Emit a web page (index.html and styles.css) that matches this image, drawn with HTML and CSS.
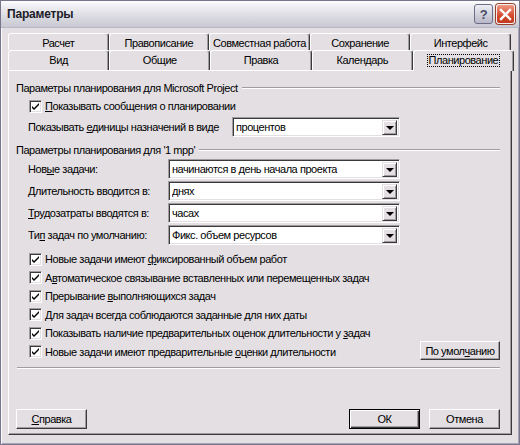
FILE: index.html
```html
<!DOCTYPE html>
<html lang="ru">
<head>
    <meta charset="UTF-8">
    <title>Параметры</title>
    <link rel="stylesheet" href="styles.css">
</head>
<body>
<div class="window">
    <div class="titlebar">
        <span class="title">Параметры</span>
        <span class="cap-btn cap-help">?</span>
        <span class="cap-btn cap-close">
            <svg width="13" height="13" viewBox="0 0 13 13"><path d="M2 2 L11 11 M11 2 L2 11" stroke="#fff" stroke-width="2.4" stroke-linecap="square"/></svg>
        </span>
    </div>

    <div class="client">
        <div class="tabs">
            <div class="tab-row back">
                <span class="tab">Расчет</span>
                <span class="tab">Правописание</span>
                <span class="tab">Совместная работа</span>
                <span class="tab">Сохранение</span>
                <span class="tab">Интерфейс</span>
            </div>
            <div class="tab-row front">
                <span class="tab">Вид</span>
                <span class="tab">Общие</span>
                <span class="tab">Правка</span>
                <span class="tab">Календарь</span>
                <span class="tab active"><span class="focus">Планирование</span></span>
            </div>
        </div>

        <div class="page">
            <div class="group-title">Параметры планирования для Microsoft Project</div>
            <label class="check first"><span class="box"></span><span><u>П</u>оказывать сообщения о планировании</span></label>
            <div class="field wide">
                <span class="label">Показывать <u>е</u>диницы назначений в виде</span>
                <span class="combo"><span class="value">процентов</span><span class="arrow"></span></span>
            </div>

            <div class="group-title second">Параметры планирования для '1 mpp'</div>
            <div class="fields">
                <div class="field">
                    <span class="label">Нов<u>ы</u>е задачи:</span>
                    <span class="combo"><span class="value">начинаются в день начала проекта</span><span class="arrow"></span></span>
                </div>
                <div class="field">
                    <span class="label"><u>Д</u>лительность вводится в:</span>
                    <span class="combo"><span class="value">днях</span><span class="arrow"></span></span>
                </div>
                <div class="field">
                    <span class="label"><u>Т</u>рудозатраты вводятся в:</span>
                    <span class="combo"><span class="value">часах</span><span class="arrow"></span></span>
                </div>
                <div class="field">
                    <span class="label">Ти<u>п</u> задач по умолчанию:</span>
                    <span class="combo"><span class="value">Фикс. объем ресурсов</span><span class="arrow"></span></span>
                </div>
            </div>

            <div class="checks">
                <label class="check"><span class="box"></span><span>Новые задачи имеют <u>ф</u>иксированный объем работ</span></label>
                <label class="check"><span class="box"></span><span>А<u>в</u>томатическое связывание вставленных или перемещенных задач</span></label>
                <label class="check"><span class="box"></span><span>Прерывание <u>в</u>ыполняющихся задач</span></label>
                <label class="check"><span class="box"></span><span><u>Д</u>ля задач всегда соблюдаются заданные для них даты</span></label>
                <label class="check"><span class="box"></span><span>Показывать наличие предварительных оценок длительности у <u>з</u>адач</span></label>
                <div class="check-line">
                    <label class="check"><span class="box"></span><span>Новые задачи имеют предварительные <u>о</u>ценки длительности</span></label>
                    <span class="btn btn-default-set">По умол<u>ч</u>анию</span>
                </div>
            </div>

            <div class="separator"></div>

            <div class="footer">
                <span class="btn"><u>С</u>правка</span>
                <span class="spacer"></span>
                <span class="btn btn-ok">ОК</span>
                <span class="btn">Отмена</span>
            </div>
        </div>
    </div>
</div>
</body>
</html>
```

FILE: styles.css
```css
* {
    margin: 0;
    padding: 0;
    box-sizing: border-box;
}
body {
    width: 520px;
    height: 445px;
    overflow: hidden;
    font-family: "Liberation Sans", Arial, sans-serif;
    font-size: 11px;
    letter-spacing: -0.45px;
    color: #000;
}
u {
    text-decoration: underline;
    text-underline-offset: 1px;
}
.window {
    width: 520px;
    height: 445px;
    background: #e3dfe3;
    border: 1px solid #77758a;
    box-shadow: inset 1px 1px #fbfbfd, inset -1px -1px #a7a5b5;
    display: flex;
    flex-direction: column;
}

/* title bar */
.titlebar {
    height: 27px;
    display: flex;
    align-items: center;
    padding: 0 4px 0 6px;
    background: linear-gradient(#fdfdfe 0%, #ececf0 25%, #d6d6de 70%, #c9c9d3 100%);
    border-bottom: 1px solid #b9b8c6;
}
.title {
    flex: 1;
    font-size: 12px;
    font-weight: bold;
    color: #1c1c28;
    letter-spacing: -0.2px;
}
.cap-btn {
    width: 19px;
    height: 20px;
    border-radius: 3px;
    display: flex;
    align-items: center;
    justify-content: center;
    margin-left: 3px;
}
.cap-help {
    background: linear-gradient(#eeeef4, #b8b8c8);
    border: 1px solid #6d6d85;
    color: #4a4a66;
    font-weight: bold;
    font-size: 13px;
}
.cap-close {
    background: linear-gradient(#ef9a82, #d4492c 60%, #c23a1f);
    border: 1px solid #f3f0f0;
    box-shadow: 0 0 0 1px #9a4030;
}

/* client area */
.client {
    flex: 1;
    display: flex;
    flex-direction: column;
    padding: 5px 7px 9px 7px;
}
.tabs {
    display: flex;
    flex-direction: column;
}
.tab-row {
    display: flex;
}
.tab-row.back {
    height: 17px;
    margin-right: 1px;
}
.tab-row.front {
    height: 20px;
}
.tab {
    flex: 1;
    display: flex;
    justify-content: center;
    align-items: center;
    border-top: 1px solid #fff;
    border-left: 1px solid #fff;
    border-right: 1px solid #3a3a3a;
    border-radius: 3px 3px 0 0;
    box-shadow: inset -1px 0 #a09ca0;
    white-space: nowrap;
}
.tab-row.back .tab {
    padding-top: 1px;
}
.tab-row.front .tab {
    padding-bottom: 2px;
}
.tab.active {
    position: relative;
    z-index: 2;
    margin-right: -2px;
    margin-bottom: -1px;
    background: #e3dfe3;
}
.focus {
    border: 1px dotted #000;
    padding: 0 1px;
    line-height: 11px;
}

/* tab page */
.page {
    flex: 1;
    display: flex;
    flex-direction: column;
    border: 1px solid;
    border-color: #fff #3a3a3a #3a3a3a #fff;
    box-shadow: inset -1px -1px #a09ca0;
    padding: 10px 11px 5px 7px;
}
.group-title {
    display: flex;
    align-items: center;
    height: 13px;
    white-space: nowrap;
}
.group-title::after {
    content: "";
    flex: 1;
    margin-left: 4px;
    margin-top: 1px;
    border-top: 1px solid #a09ca0;
    border-bottom: 1px solid #fff;
}
.group-title.second {
    margin-top: 6px;
}

.check {
    display: flex;
    align-items: center;
    height: 18.5px;
    margin-left: 13px;
    white-space: nowrap;
}
.check.first {
    margin-top: 5px;
    height: 14px;
}
.box {
    width: 13px;
    height: 13px;
    margin-right: 3px;
    background: #fff url("data:image/svg+xml;utf8,<svg xmlns='http://www.w3.org/2000/svg' width='9' height='9'><path d='M1 3 L3 5 L8 0 L8 2 L3 7 L1 5 Z' fill='black'/></svg>") no-repeat 1px 2px;
    border: 1px solid;
    border-color: #a09ca0 #fff #fff #a09ca0;
    box-shadow: inset 1px 1px #3a3a3a, inset -1px -1px #e3dfe3;
    flex-shrink: 0;
}

.field {
    display: flex;
    align-items: center;
    height: 20px;
    margin-left: 12px;
}
.field.wide {
    margin-top: 4px;
}
.field .label {
    width: 140px;
    white-space: nowrap;
}
.field.wide .label {
    width: 204px;
}
.fields {
    margin-top: 3px;
    display: flex;
    flex-direction: column;
    gap: 2px;
}
.combo {
    flex: 0 0 auto;
    width: 232px;
    height: 20px;
    display: flex;
    align-items: center;
    background: #fff;
    border: 1px solid;
    border-color: #a09ca0 #fff #fff #a09ca0;
    box-shadow: inset 1px 1px #3a3a3a, inset -1px -1px #e3dfe3;
    padding: 2px 2px 2px 3px;
}
.field.wide .combo {
    width: 168px;
}
.value {
    flex: 1;
    white-space: nowrap;
    overflow: hidden;
}
.arrow {
    width: 15px;
    height: 15px;
    background: #e3dfe3;
    border: 1px solid;
    border-color: #e3dfe3 #3a3a3a #3a3a3a #e3dfe3;
    box-shadow: inset 1px 1px #fff, inset -1px -1px #a09ca0;
    display: flex;
    align-items: center;
    justify-content: center;
}
.arrow::after {
    content: "";
    border-left: 4px solid transparent;
    border-right: 4px solid transparent;
    border-top: 4px solid #000;
    margin-top: 1px;
}

.checks {
    margin-top: 5px;
    display: flex;
    flex-direction: column;
}
.check-line {
    display: flex;
    align-items: center;
    justify-content: space-between;
}

.btn {
    display: flex;
    align-items: center;
    justify-content: center;
    height: 20px;
    width: 71px;
    background: #e3dfe3;
    border: 1px solid;
    border-color: #fff #3a3a3a #3a3a3a #fff;
    box-shadow: inset -1px -1px #a09ca0;
    white-space: nowrap;
}
.btn-default-set {
    width: 80px;
    height: 19px;
    margin-top: -2px;
}
.btn-ok {
    border: 1px solid #000;
    box-shadow: inset 1px 1px #fff, inset -1px -1px #3a3a3a, inset -2px -2px #a09ca0;
    margin-right: 9px;
}

.separator {
    margin-top: 6px;
    margin-left: 1px;
    border-top: 1px solid #a09ca0;
    border-bottom: 1px solid #fff;
}
.footer {
    margin-top: auto;
    display: flex;
}
.spacer {
    flex: 1;
}
```
